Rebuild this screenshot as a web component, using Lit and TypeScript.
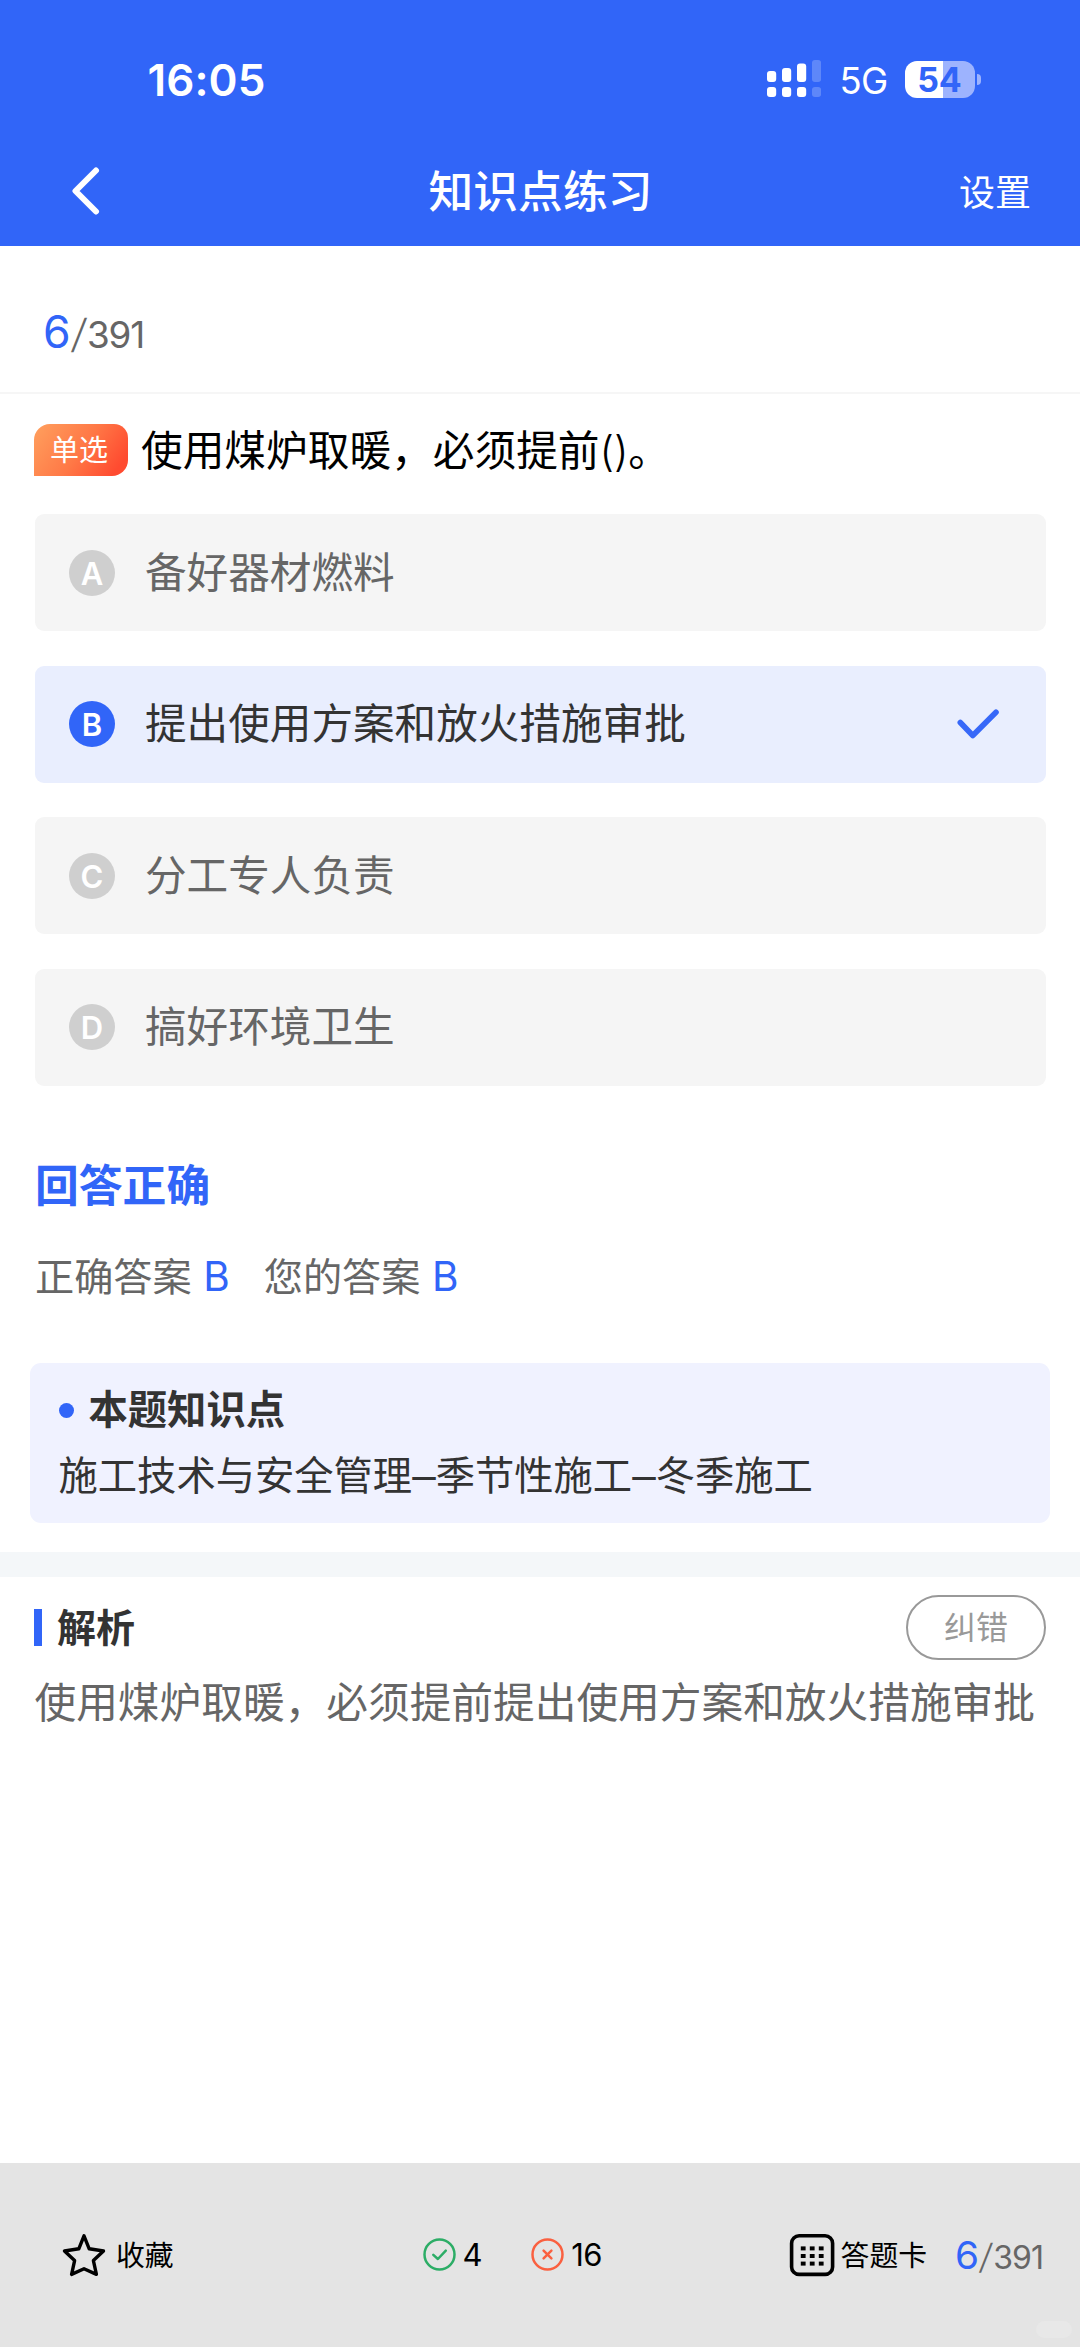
import { LitElement, html, css, svg } from "lit";
import { customElement, property } from "lit/decorators.js";
import { classMap } from "lit/directives/class-map.js";

interface Option {
  letter: string;
  text: string;
}

const OPTIONS: Option[] = [
  { letter: "A", text: "备好器材燃料" },
  { letter: "B", text: "提出使用方案和放火措施审批" },
  { letter: "C", text: "分工专人负责" },
  { letter: "D", text: "搞好环境卫生" },
];

/** Status bar: clock, signal, network and battery. */
@customElement("status-bar")
export class StatusBar extends LitElement {
  static styles = css`
    :host {
      display: flex;
      align-items: center;
      justify-content: space-between;
      height: 60px;
      padding: 50px 99.5px 0 147.5px;
      color: #fff;
    }
    .time {
      font-size: 44px;
      font-weight: 600;
      line-height: 60px;
      letter-spacing: 0.1px;
    }
    .right {
      display: flex;
      align-items: center;
      margin-top: -2px;
    }
    .signal {
      display: block;
      width: 54px;
      height: 38px;
      margin-right: 18.5px;
    }
    .net {
      width: 65px;
      font-size: 36.5px;
      font-weight: 400;
      line-height: 60px;
      letter-spacing: -0.8px;
      padding-top: 4px;
    }
    .battery {
      display: flex;
      align-items: center;
      justify-content: center;
      width: 70px;
      height: 37px;
      border-radius: 12px;
      background: linear-gradient(90deg, #fff 54%, #9db3fe 54%);
      color: #3165f8;
      font-size: 34px;
      font-weight: 700;
      line-height: 37px;
    }
    .nub {
      width: 4px;
      height: 11px;
      margin-left: 2px;
      border-radius: 0 5px 5px 0;
      background: #9db3fe;
    }
  `;
  render() {
    const tops = [11, 8, 3.5, 0];
    return html`
      <span class="time">16:05</span>
      <div class="right">
        <svg class="signal" viewBox="0 0 54 38">
          ${tops.map(
            (t, i) => svg`
              <g fill="#fff" opacity=${i === 3 ? 0.22 : 1}>
                <rect x=${i * 15} y=${t} width="9.2" height=${22 - t} rx="3"></rect>
                <rect x=${i * 15} y="27" width="9.2" height="10" rx="3"></rect>
              </g>`
          )}
        </svg>
        <span class="net">5G</span>
        <span class="battery">54</span>
        <i class="nub"></i>
      </div>
    `;
  }
}

/** Progress such as 6/391. */
@customElement("question-count")
export class QuestionCount extends LitElement {
  @property({ type: Number }) current = 0;
  @property({ type: Number }) total = 0;
  static styles = css`
    :host {
      display: inline-block;
      font-size: 1em;
      line-height: 1.2;
      color: #666;
      white-space: nowrap;
    }
    .now {
      color: #3165f8;
      font-size: 1.21em;
    }
    .slash {
      display: inline-block;
      font-size: 1.08em;
      font-weight: 300;
      transform: skewX(-7deg);
      margin: 0 0.06em 0 0.03em;
    }
    .all {
      letter-spacing: -0.03em;
    }
  `;
  render() {
    return html`<span class="now">${this.current}</span><span class="all"><span class="slash">/</span>${this.total}</span>`;
  }
}

@customElement("answer-option")
export class AnswerOption extends LitElement {
  @property() letter = "";
  @property() text = "";
  @property({ type: Boolean }) selected = false;
  static styles = css`
    .row {
      display: flex;
      align-items: center;
      height: 117px;
      box-sizing: border-box;
      padding: 0 47px 0 34px;
      border-radius: 9px;
      background: #f5f5f5;
      color: #666;
    }
    .row.on {
      background: #e9eefe;
      color: #333;
    }
    .letter {
      width: 46px;
      height: 46px;
      margin-right: 30px;
      border-radius: 50%;
      background: #cfcfcf;
      color: #fff;
      text-align: center;
      font-size: 31px;
      line-height: 47px;
      font-weight: 600;
    }
    .on .letter {
      background: #3165f8;
    }
    .text {
      flex: 1;
      font-size: 41.6px;
      line-height: 60px;
    }
    .check {
      display: block;
      width: 42px;
      height: 32px;
    }
  `;
  render() {
    return html`
      <div class=${classMap({ row: true, on: this.selected })}>
        <span class="letter">${this.letter}</span>
        <span class="text">${this.text}</span>
        ${this.selected
          ? html`<svg class="check" viewBox="0 0 42 32" fill="none" stroke="#3768f8" stroke-width="5.6" stroke-linecap="round" stroke-linejoin="round">
              <path d="M3.3 14.5L15.8 27.5L39 4.2"></path>
            </svg>`
          : null}
      </div>
    `;
  }
}

@customElement("bottom-bar")
export class BottomBar extends LitElement {
  static styles = css`
    :host {
      position: relative;
      display: flex;
      align-items: flex-start;
      height: 184px;
      box-sizing: border-box;
      padding: 62px 34px 0 62px;
      background: #e4e4e4;
      color: #000;
      font-size: 28.8px;
      line-height: 60px;
    }
    .item {
      display: flex;
      align-items: center;
      height: 60px;
    }
    svg {
      display: block;
      flex: none;
    }
    .star {
      width: 44px;
      height: 44px;
      margin-right: 10px;
    }
    .label {
      padding-top: 2px;
      line-height: 58px;
    }
    .right-count {
      margin-left: 249px;
    }
    .wrong-count {
      margin-left: 49px;
    }
    .num {
      font-size: 31px;
      letter-spacing: -0.5px;
      margin-left: 7px;
    }
    .ring {
      width: 33px;
      height: 33px;
      margin-top: -2px;
    }
    .card {
      margin-left: auto;
    }
    .grid {
      width: 46px;
      height: 44px;
      margin-right: 6px;
    }
    .count {
      margin: 7px 0 0 28px;
      width: 91px;
      font-size: 32px;
    }
    .blob {
      position: absolute;
      right: 8px;
      bottom: 9px;
      width: 36px;
      height: 17px;
      border-radius: 9px;
      background: #e8e8e8;
    }
  `;
  render() {
    const cells = [0, 1, 2, 3, 4, 5, 6, 7, 8];
    return html`
      <div class="item">
        <svg class="star" viewBox="0 0 44 44" fill="none" stroke="#000" stroke-width="3.4" stroke-linejoin="round">
          <path d="M22 2.8L27.2 15.8L41.5 18L31.4 27.6L34.4 41.4L22 35.8L9.6 41.4L12.6 27.6L2.5 18L16.8 15.8Z"></path>
        </svg>
        <span class="label">收藏</span>
      </div>
      <div class="item right-count">
        <svg class="ring" viewBox="0 0 33 33" fill="none" stroke="#2cad66" stroke-width="2.5" stroke-linecap="round" stroke-linejoin="round">
          <circle cx="16.5" cy="16.5" r="15"></circle>
          <path d="M10.3 16.9L14.9 21L22.8 12.6"></path>
        </svg>
        <span class="num">4</span>
      </div>
      <div class="item wrong-count">
        <svg class="ring" viewBox="0 0 33 33" fill="none" stroke="#fa6040" stroke-width="2.5" stroke-linecap="round">
          <circle cx="16.5" cy="16.5" r="15"></circle>
          <path d="M12.6 12.6L20.4 20.4M20.4 12.6L12.6 20.4"></path>
        </svg>
        <span class="num">16</span>
      </div>
      <div class="item card">
        <svg class="grid" viewBox="0 0 46 44">
          <rect x="2.6" y="2.8" width="41" height="38.6" rx="7.5" fill="none" stroke="#000" stroke-width="3.6"></rect>
          ${cells.map(
            (c) =>
              svg`<rect x=${11.8 + (c % 3) * 9} y=${13.4 + Math.floor(c / 3) * 7.6} width="4.8" height="4" fill="#000"></rect>`
          )}
        </svg>
        <span class="label">答题卡</span>
      </div>
      <question-count class="count" current="6" total="391"></question-count>
      <i class="blob"></i>
    `;
  }
}

@customElement("app-root")
export class AppRoot extends LitElement {
  static styles = css`
    :host {
      display: flex;
      flex-direction: column;
      width: 1080px;
      height: 2347px;
      background: #fff;
      font-family: Inter, "Noto Sans CJK SC", sans-serif;
      color: #333;
      overflow: hidden;
    }
    .header {
      height: 246px;
      background: #3165f8;
      color: #fff;
    }
    .nav {
      display: grid;
      grid-template-columns: 1fr auto 1fr;
      align-items: center;
      height: 60px;
      margin-top: 51px;
      padding: 0 49px 0 70px;
    }
    .back {
      display: block;
      width: 32px;
      height: 50px;
      margin-top: -3px;
    }
    .title {
      margin-left: -20px;
      font-size: 44.8px;
      font-weight: 500;
      line-height: 60px;
    }
    .settings {
      justify-self: end;
      padding-top: 3px;
      font-size: 36px;
      line-height: 58px;
    }
    .progress {
      height: 148px;
      box-sizing: border-box;
      padding: 60px 43px 0;
      border-bottom: 2px solid #f6f6f6;
      font-size: 36.8px;
    }
    .question {
      display: flex;
      align-items: center;
      height: 60px;
      padding: 26px 34px 0;
    }
    .tag {
      width: 94px;
      height: 52px;
      box-sizing: border-box;
      margin-right: 13px;
      padding-right: 4px;
      border-radius: 16px 14px 16px 0;
      background: linear-gradient(125deg, #ffa05e 0%, #ff7846 50%, #ff4b30 88%);
      color: #fff;
      text-align: center;
      font-size: 29px;
      line-height: 54px;
    }
    .stem {
      padding-top: 1px;
      font-size: 41.7px;
      line-height: 60px;
      color: #000;
    }
    .paren {
      font-weight: 300;
      letter-spacing: -0.2px;
    }
    .options {
      display: flex;
      flex-direction: column;
      gap: 34.5px;
      padding: 34px 34px 0 35px;
    }
    .result {
      padding: 71px 35px 0;
      color: #3165f8;
      font-size: 43.8px;
      font-weight: 700;
      line-height: 60px;
    }
    .answers {
      display: flex;
      gap: 34px;
      padding: 30px 35px 0;
      color: #666;
      font-size: 39.2px;
      line-height: 60px;
    }
    .answers b {
      margin-left: 11.5px;
      color: #3165f8;
      font-size: 40.5px;
      font-weight: 400;
    }
    .point {
      height: 160px;
      box-sizing: border-box;
      margin: 56.5px 30px 0;
      padding: 17px 28.5px 0;
      border-radius: 11px;
      background: #f0f2ff;
      font-size: 39.3px;
      line-height: 60px;
    }
    .point-title {
      display: flex;
      align-items: center;
      gap: 15px;
      font-weight: 700;
    }
    .dot {
      width: 15px;
      height: 15px;
      border-radius: 50%;
      background: #3165f8;
    }
    .point-text {
      padding-top: 6px;
      white-space: nowrap;
    }
    .dash {
      font-size: 47px;
      font-weight: 300;
      line-height: 0;
      vertical-align: -3px;
    }
    .band {
      height: 25px;
      margin-top: 29px;
      background: #f4f7f9;
    }
    .analysis-head {
      display: flex;
      align-items: center;
      height: 65px;
      padding: 18px 34px 0;
    }
    .bar {
      width: 8px;
      height: 37px;
      margin-right: 15px;
      background: #3165f8;
    }
    .analysis-title {
      flex: 1;
      font-size: 39px;
      font-weight: 700;
      line-height: 60px;
    }
    .report {
      width: 140px;
      height: 65px;
      box-sizing: border-box;
      border: 2px solid #999;
      border-radius: 33px;
      color: #999;
      text-align: center;
      font-size: 32px;
      line-height: 61px;
    }
    .analysis {
      flex: 1;
      padding: 12.5px 0 0 34.5px;
      color: #666;
      font-size: 41.7px;
      line-height: 60px;
      white-space: nowrap;
    }
  `;
  render() {
    return html`
      <header class="header">
        <status-bar></status-bar>
        <div class="nav">
          <svg class="back" viewBox="0 0 32 50" fill="none" stroke="#fff" stroke-width="6" stroke-linecap="round" stroke-linejoin="round">
            <path d="M26 5.5L5.5 26L26 46.5"></path>
          </svg>
          <span class="title">知识点练习</span>
          <span class="settings">设置</span>
        </div>
      </header>
      <div class="progress">
        <question-count current="6" total="391"></question-count>
      </div>
      <div class="question">
        <span class="tag">单选</span>
        <span class="stem">使用煤炉取暖${"\uFF0C"}必须提前<span class="paren">()</span>。</span>
      </div>
      <div class="options">
        ${OPTIONS.map(
          (o) => html`<answer-option letter=${o.letter} text=${o.text} ?selected=${o.letter === "B"}></answer-option>`
        )}
      </div>
      <div class="result">回答正确</div>
      <div class="answers">
        <span>正确答案<b>B</b></span>
        <span>您的答案<b>B</b></span>
      </div>
      <div class="point">
        <div class="point-title"><i class="dot"></i>本题知识点</div>
        <div class="point-text">施工技术与安全管理<span class="dash">–</span>季节性施工<span class="dash">–</span>冬季施工</div>
      </div>
      <div class="band"></div>
      <div class="analysis-head">
        <i class="bar"></i>
        <span class="analysis-title">解析</span>
        <span class="report">纠错</span>
      </div>
      <div class="analysis">使用煤炉取暖${"\uFF0C"}必须提前提出使用方案和放火措施审批</div>
      <bottom-bar></bottom-bar>
    `;
  }
}
